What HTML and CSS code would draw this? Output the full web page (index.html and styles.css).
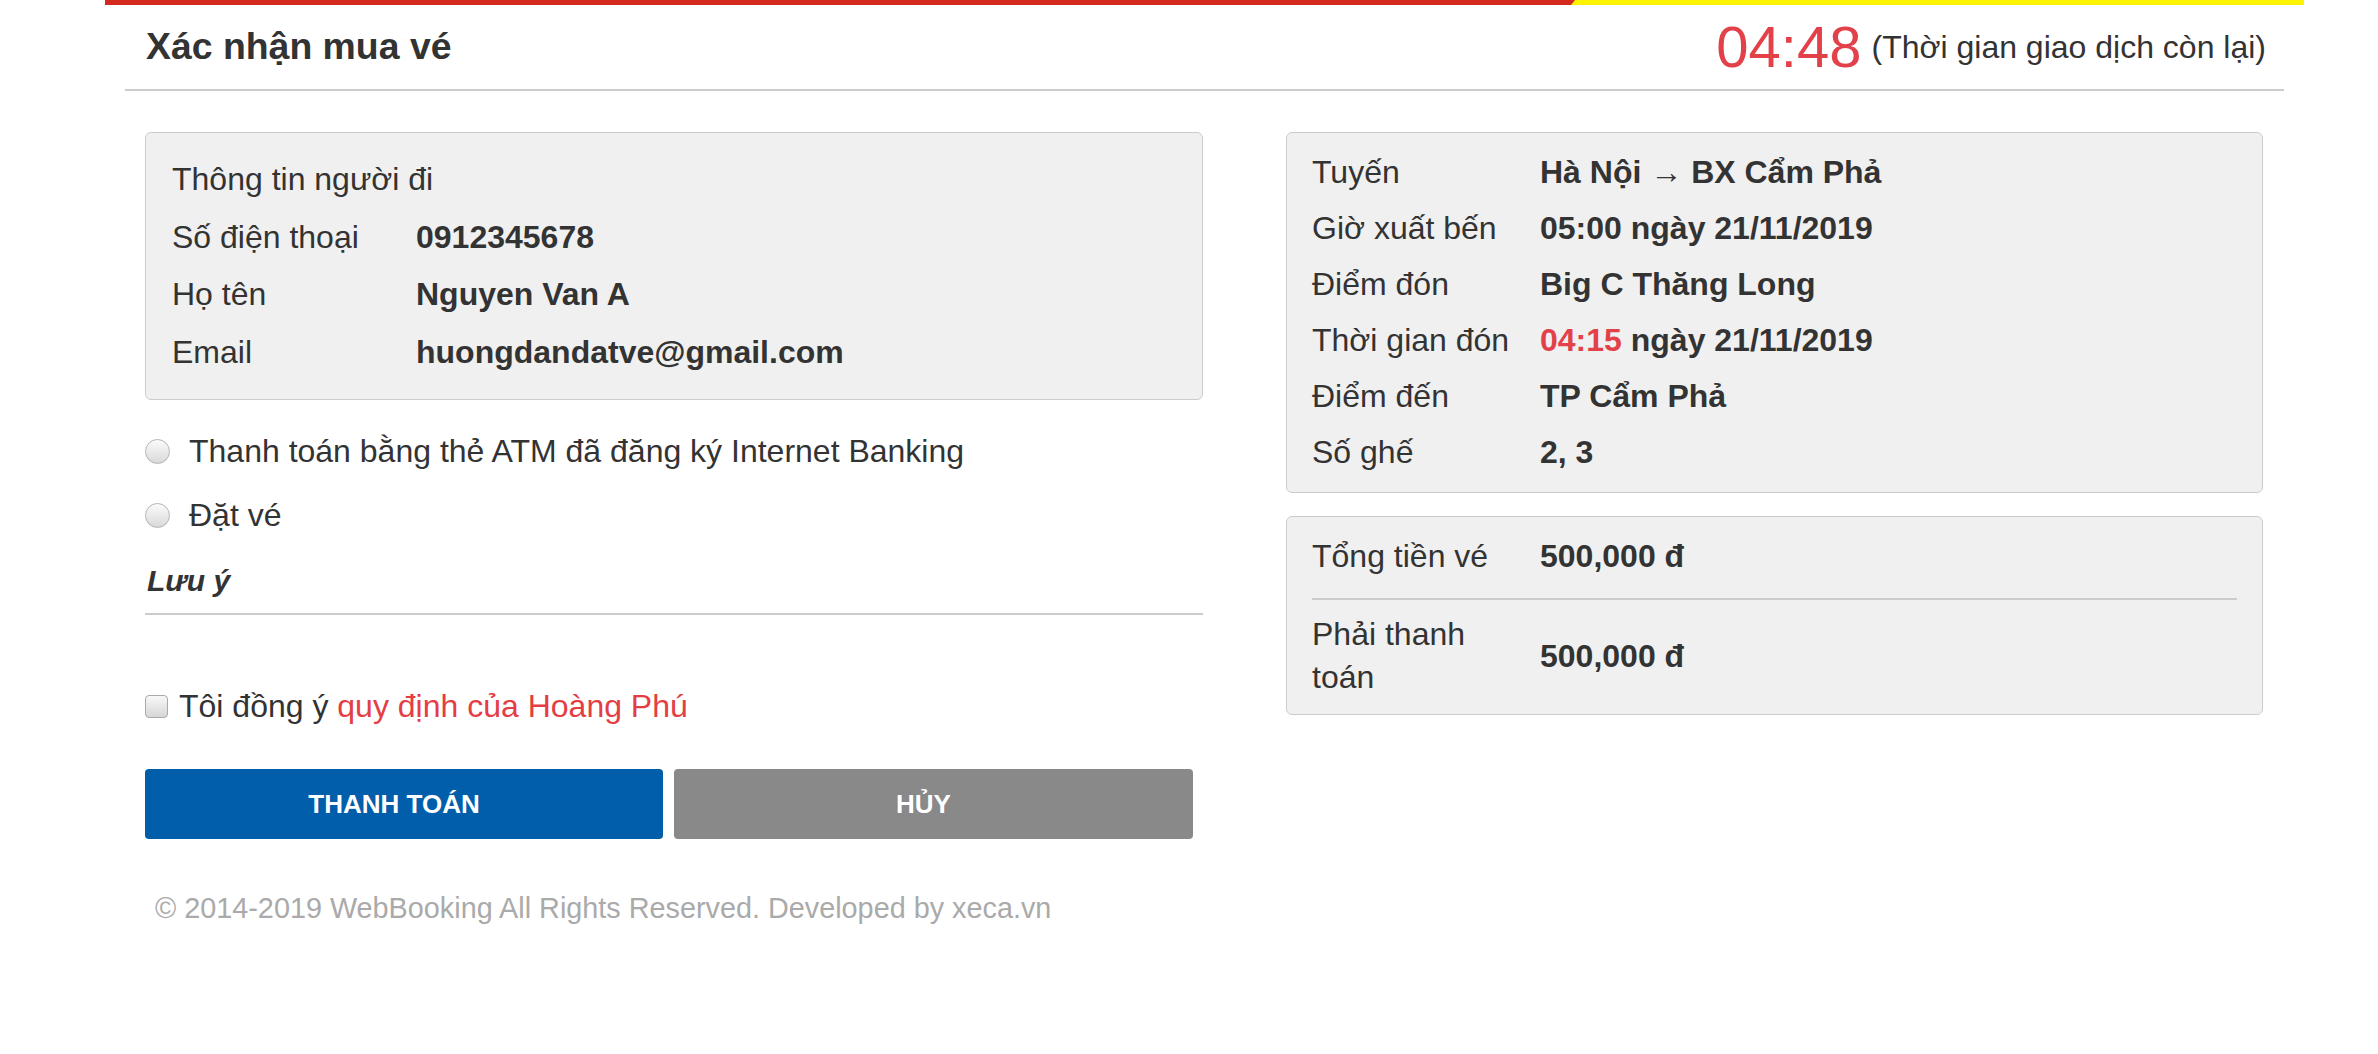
FILE: index.html
```html
<!DOCTYPE html>
<html lang="vi">
<head>
<meta charset="utf-8">
<title>Xác nhận mua vé</title>
<link rel="stylesheet" href="styles.css">
</head>
<body>
<div class="page">
  <div class="topbar"><div class="topbar-red"></div></div>
  <header class="header">
    <h1 class="title">Xác nhận mua vé</h1>
    <div class="timer">
      <span class="timer-num">04:48</span>
      <span class="timer-note">(Thời gian giao dịch còn lại)</span>
    </div>
  </header>
  <main class="content">
    <section class="col-left">
      <div class="card card-passenger">
        <div class="info-head">Thông tin người đi</div>
        <div class="info-row"><span class="info-lbl">Số điện thoại</span><span class="info-val">0912345678</span></div>
        <div class="info-row"><span class="info-lbl">Họ tên</span><span class="info-val">Nguyen Van A</span></div>
        <div class="info-row"><span class="info-lbl">Email</span><span class="info-val">huongdandatve@gmail.com</span></div>
      </div>
      <label class="opt"><input class="radio" type="radio" name="pay"><span>Thanh toán bằng thẻ ATM đã đăng ký Internet Banking</span></label>
      <label class="opt"><input class="radio" type="radio" name="pay"><span>Đặt vé</span></label>
      <div class="note">Lưu ý</div>
      <div class="note-line"></div>
      <label class="agree"><input class="check" type="checkbox"><span>Tôi đồng ý <a class="rule-link" href="#">quy định của Hoàng Phú</a></span></label>
      <div class="actions">
        <button class="btn btn-pay" type="button">THANH TOÁN</button>
        <button class="btn btn-cancel" type="button">HỦY</button>
      </div>
      <footer class="footer">© 2014-2019 WebBooking All Rights Reserved. Developed by xeca.vn</footer>
    </section>
    <section class="col-right">
      <div class="card card-trip">
        <div class="trip-row"><span class="trip-lbl">Tuyến</span><span class="trip-val">Hà Nội → BX Cẩm Phả</span></div>
        <div class="trip-row"><span class="trip-lbl">Giờ xuất bến</span><span class="trip-val">05:00 ngày 21/11/2019</span></div>
        <div class="trip-row"><span class="trip-lbl">Điểm đón</span><span class="trip-val">Big C Thăng Long</span></div>
        <div class="trip-row"><span class="trip-lbl">Thời gian đón</span><span class="trip-val"><span class="red">04:15</span> ngày 21/11/2019</span></div>
        <div class="trip-row"><span class="trip-lbl">Điểm đến</span><span class="trip-val">TP Cẩm Phả</span></div>
        <div class="trip-row"><span class="trip-lbl">Số ghế</span><span class="trip-val">2, 3</span></div>
      </div>
      <div class="card card-total">
        <div class="total-row total-first"><span class="trip-lbl">Tổng tiền vé</span><span class="trip-val">500,000 đ</span></div>
        <div class="total-row total-last"><span class="trip-lbl">Phải thanh toán</span><span class="trip-val">500,000 đ</span></div>
      </div>
    </section>
  </main>
</div>
</body>
</html>
```
FILE: styles.css
```css
* { box-sizing: border-box; }
html, body { margin: 0; padding: 0; background: #fff; }
body {
  font-family: "Liberation Sans", Arial, Helvetica, sans-serif;
  font-size: 32px;
  color: #333;
}
.page {
  margin-left: 105px;
  width: 2199px;
}
.topbar {
  height: 5px;
  background: #fff500;
}
.topbar-red {
  width: 1470px;
  height: 5px;
  background: #d4291f;
  clip-path: polygon(0 0, 100% 0, calc(100% - 4px) 100%, 0 100%);
}
.header {
  margin: 0 20px;
  height: 86px;
  border-bottom: 2px solid #ccc;
  display: flex;
  align-items: center;
  justify-content: space-between;
  padding: 0 18px 0 21px;
}
.title {
  margin: 0;
  font-size: 37.4px;
  font-weight: bold;
  color: #333;
  line-height: 1.1;
}
.timer {
  display: flex;
  align-items: center;
  gap: 10px;
}
.timer-num {
  font-size: 58px;
  color: #e2414a;
  line-height: 1;
}
.timer-note {
  font-size: 32px;
  color: #333;
  line-height: 1;
}
.content {
  display: grid;
  grid-template-columns: 1058px 977px;
  column-gap: 83px;
  padding: 41px 0 0 40px;
}
.card {
  background: #f0f0f0;
  border: 1px solid #ccc;
  border-radius: 6px;
}
.card-passenger {
  padding: 18px 26px 18px;
  line-height: 57.6px;
}
.info-row { display: flex; }
.info-lbl { width: 244px; flex: none; }
.info-val { font-weight: bold; }
.opt {
  display: flex;
  align-items: center;
  height: 64px;
  gap: 19px;
}
.opt:first-of-type { margin-top: 19px; }
.radio {
  appearance: none;
  -webkit-appearance: none;
  margin: 0;
  width: 25px;
  height: 25px;
  border-radius: 50%;
  border: 1px solid #b4b4b4;
  background: linear-gradient(#fbfbfb, #d9d9d9);
  flex: none;
}
.note {
  margin-top: 12px;
  font-size: 30px;
  font-weight: bold;
  font-style: italic;
  line-height: 43px;
  padding-left: 2px;
}
.note-line {
  margin-top: 11px;
  height: 2px;
  background: #ccc;
}
.agree {
  display: flex;
  align-items: center;
  gap: 11px;
  height: 46px;
  margin-top: 68px;
}
.check {
  appearance: none;
  -webkit-appearance: none;
  margin: 0;
  width: 23px;
  height: 23px;
  border-radius: 4px;
  border: 1px solid #aaa;
  background: linear-gradient(#f8f8f8, #d6d6d6);
  flex: none;
}
.rule-link { color: #e43d44; text-decoration: none; }
.actions {
  display: flex;
  gap: 11px;
  margin-top: 40px;
}
.btn {
  width: 518px;
  height: 70px;
  border: 0;
  border-radius: 4px;
  color: #fff;
  font-family: "Liberation Sans", Arial, sans-serif;
  font-size: 26px;
  font-weight: bold;
  padding: 0 20px 0 0;
}
.btn-pay { background: #005eaa; }
.btn-cancel { background: #898989; width: 519px; }
.footer {
  margin-top: 49px;
  padding-left: 10px;
  font-size: 28.8px;
  line-height: 40px;
  color: #aaa;
}
.card-trip {
  padding: 11px 25px 12px;
  line-height: 56px;
}
.trip-row, .total-row {
  display: grid;
  grid-template-columns: 210px 1fr;
  column-gap: 18px;
}
.trip-val { font-weight: bold; }
.red { color: #e2414a; }
.card-total {
  margin-top: 23px;
  padding: 0 25px;
  line-height: 43px;
}
.total-row { align-items: center; }
.total-first {
  padding: 18px 0 20px;
  border-bottom: 2px solid #ccc;
}
.total-last {
  padding: 13px 0 15px;
}
```
